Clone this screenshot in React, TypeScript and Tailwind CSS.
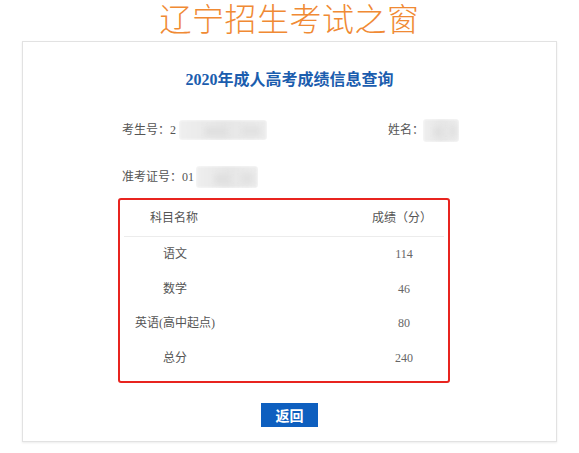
import React from 'react';

const scores = [
    { name: '语文', score: '114' },
    { name: '数学', score: '46' },
    { name: '英语(高中起点)', score: '80' },
    { name: '总分', score: '240' },
];

// blurred-out personal data
const Masked: React.FC<{ className: string }> = ({ className }) => (
    <div className={`relative overflow-hidden rounded-[3px] ${className}`}>
        <div className="absolute inset-0 bg-gradient-to-r from-[#efefef] via-[#e6e6e6] to-[#ececec] blur-[1.5px]" />
        <div className="absolute left-[30%] top-[35%] h-[45%] w-[25%] bg-[#e0e0e0] blur-[2px]" />
        <div className="absolute right-[8%] top-[30%] h-[50%] w-[20%] bg-[#e2e2e2] blur-[2px]" />
    </div>
);

const App: React.FC = () => {
    return (
        <div className="w-[579px] h-[453px] bg-white overflow-hidden font-['Liberation_Serif','Noto_Sans_CJK_SC',serif]">
            {/* Site title */}
            <div className="h-[41px] text-center">
                <span className="font-['Noto_Sans_CJK_SC',sans-serif] font-light text-[32px] leading-[35px] tracking-[0.5px] text-[#f08a34]">
                    辽宁招生考试之窗
                </span>
            </div>

            {/* Result card */}
            <div className="mx-[22px] h-[401px] border border-[#e2e2e2] shadow-[0_1px_2px_rgba(0,0,0,0.08)] flex flex-col">
                <h1 className="mt-[26px] h-[24px] text-center text-[16px] leading-[24px] font-bold text-[#1b5dae]">
                    2020年成人高考成绩信息查询
                </h1>

                <div className="mt-[28px] pl-[99px] pr-[97px] flex justify-between items-center h-[20px] text-[12px] text-[#555]">
                    <div className="flex items-center">
                        <span>考生号：2</span>
                        <Masked className="ml-[3px] w-[88px] h-[20px]" />
                    </div>
                    <div className="flex items-center">
                        <span>姓名：</span>
                        <Masked className="-ml-[1px] w-[36px] h-[23px]" />
                    </div>
                </div>

                <div className="mt-[27px] pl-[99px] flex items-center h-[20px] text-[12px] text-[#555]">
                    <span>准考证号：01</span>
                    <Masked className="ml-[2px] w-[62px] h-[22px]" />
                </div>

                {/* Score table, marked with a red box */}
                <div className="mt-[11px] ml-[95px] w-[332px] h-[185px] border-2 border-[#e8241f] rounded-[3px] px-[4px] text-[12px] text-[#555]">
                    <div className="flex items-center h-[37px] border-b border-[#ececec]">
                        <div className="w-[100px] text-center">科目名称</div>
                        <div className="flex-1" />
                        <div className="w-[80px] text-center mr-[2px]">成绩（分）</div>
                    </div>
                    {scores.map((row) => (
                        <div key={row.name} className="flex items-center h-[34.5px]">
                            <div className="w-[102px] text-center">{row.name}</div>
                            <div className="flex-1" />
                            <div className="w-[80px] text-center text-[#666]">{row.score}</div>
                        </div>
                    ))}
                </div>

                <div className="mt-[20px] flex justify-center">
                    <button className="w-[57px] h-[24px] bg-[#0e5fbf] text-white text-[14px] font-bold leading-[24px] font-['Noto_Sans_CJK_SC',sans-serif]">
                        返回
                    </button>
                </div>
            </div>
        </div>
    );
};

export default App;
